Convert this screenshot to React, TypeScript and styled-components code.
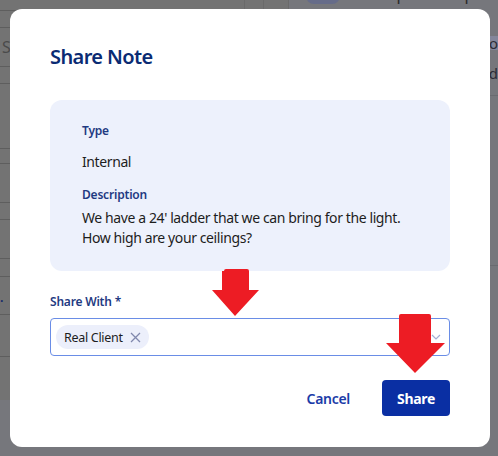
import React from "react";
import styled, { createGlobalStyle } from "styled-components";

const Global = createGlobalStyle`
  html, body { margin: 0; padding: 0; }
  body { font-family: "Noto Sans", "Open Sans", sans-serif; overflow: hidden; }
  * { box-sizing: border-box; }
`;

const Page = styled.div`
  position: relative;
  width: 498px;
  height: 456px;
  background: #76777c;
  display: flex;
  overflow: hidden;
`;

const LeftTable = styled.div`
  flex: none;
  width: 245px;
  height: 400px;
  background: #737373;
  border-right: 1px solid #6a6a6a;
  display: flex;
  flex-direction: column;
`;

const TableRow = styled.div<{ $h: number }>`
  height: ${(p) => p.$h}px;
  flex: none;
  border-bottom: 1px solid #5e5e5e;
  display: flex;
  align-items: center;
  padding-left: 2px;
  color: #4a4a4a;
  font-size: 16px;
`;

const BlueText = styled.span`
  color: #10256a;
  font-size: 15px;
  margin-left: -6px;
`;

const MidCol = styled.div<{ $w: number }>`
  flex: none;
  width: ${(p) => p.$w}px;
  height: 30px;
  border-right: 1px solid #6a6a6a;
  background: #737373;
`;

const RightPanel = styled.div`
  flex: 1;
  min-width: 0;
  overflow: hidden;
  display: flex;
  flex-direction: column;
`;

const MsgRow = styled.div`
  height: 20px;
  flex: none;
  display: flex;
  align-items: flex-end;
  gap: 18px;
  padding-left: 17px;
  margin-top: -16px;
`;

const Pill = styled.div`
  flex: none;
  width: 34px;
  height: 20px;
  border-radius: 8px;
  background: #666c89;
`;

const MsgText = styled.span`
  color: #2a2a2a;
  font-size: 16px;
  line-height: 20px;
  white-space: nowrap;
  letter-spacing: -0.3px;
`;

const SideBand = styled.div<{ $bg?: string; $h: number; $line?: boolean }>`
  height: ${(p) => p.$h}px;
  flex: none;
  background: ${(p) => p.$bg || "transparent"};
  border-bottom: ${(p) => (p.$line ? "1px solid #6a6b70" : "none")};
  display: flex;
  align-items: center;
  justify-content: flex-end;
  color: #2b2b35;
  font-size: 15px;
  white-space: nowrap;
  overflow: hidden;
`;

const Modal = styled.div`
  position: absolute;
  top: 9px;
  left: 10px;
  width: 480px;
  background: #ffffff;
  border-radius: 12px;
  padding: 34px 40px 31px;
  display: flex;
  flex-direction: column;
  & > * { flex: none; }
`;

const Title = styled.h2`
  margin: 0;
  font-size: 20px;
  line-height: 28px;
  font-weight: 600;
  letter-spacing: -0.6px;
  color: #0a2b73;
`;

const InfoBox = styled.div`
  margin-top: 29px;
  background: #edf1fc;
  border-radius: 12px;
  padding: 23px 32px 23px;
  display: flex;
  flex-direction: column;
`;

const Label = styled.div<{ $mt?: number }>`
  font-size: 12px;
  line-height: 16px;
  font-weight: 600;
  letter-spacing: -0.2px;
  color: #1f3a82;
  margin-top: ${(p) => p.$mt ?? 0}px;
`;

const Value = styled.div<{ $mt?: number }>`
  font-size: 14px;
  line-height: 20px;
  letter-spacing: -0.4px;
  color: #1d1d1d;
  margin-top: ${(p) => p.$mt ?? 0}px;
`;

const FieldLabel = styled(Label)`
  margin-top: 23px;
`;

const Input = styled.div`
  margin-top: 8px;
  height: 38px;
  border: 1px solid #6a8de6;
  border-radius: 4px;
  display: flex;
  align-items: center;
  padding: 0 8px 0 5px;
`;

const Chip = styled.div`
  height: 24px;
  border-radius: 12px;
  background: #eceffb;
  display: flex;
  align-items: center;
  gap: 7px;
  padding: 0 8px 0 8px;
  font-size: 12.5px;
  letter-spacing: -0.3px;
  color: #1d1d1d;
`;

const Spacer = styled.div`
  flex: 1;
`;

const Actions = styled.div`
  margin-top: 24px;
  display: flex;
  justify-content: flex-end;
  align-items: center;
  gap: 16px;
`;

const TextButton = styled.button`
  background: none;
  border: none;
  font-family: inherit;
  font-size: 14px;
  font-weight: 600;
  letter-spacing: -0.3px;
  color: #1b3ca8;
  height: 36px;
  padding: 0 16px;
`;

const PrimaryButton = styled.button`
  background: #0a2fa3;
  border: none;
  border-radius: 4px;
  font-family: inherit;
  font-size: 14px;
  font-weight: 700;
  letter-spacing: -0.3px;
  color: #ffffff;
  height: 36px;
  width: 68px;
`;

const Arrow = styled.svg<{ $x: number; $y: number }>`
  position: absolute;
  left: ${(p) => p.$x}px;
  top: ${(p) => p.$y}px;
`;

const XIcon = () => (
  <svg width="11" height="11" viewBox="0 0 11 11">
    <path d="M1 1L10 10M10 1L1 10" stroke="#8088ad" strokeWidth="1.3" fill="none" />
  </svg>
);

const Chevron = () => (
  <svg width="10" height="6" viewBox="0 0 10 6">
    <path d="M1 1L5 5L9 1" stroke="#a4afd6" strokeWidth="1.2" fill="none" />
  </svg>
);

export default function App() {
  const rows = [11, 17, 39, 17, 65, 15, 39, 17, 39, 18, 38, 42];
  return (
    <>
      <Global />
      <Page>
        <LeftTable>
          {rows.map((h, i) => (
            <TableRow key={i} $h={h}>
              {i === 2 ? "S" : i === 10 ? <BlueText>l.</BlueText> : null}
            </TableRow>
          ))}
        </LeftTable>
        <MidCol $w={19} />
        <MidCol $w={25} />
        <RightPanel>
          <MsgRow>
            <Pill />
            <MsgText>I can provide updates to</MsgText>
          </MsgRow>
          <SideBand $h={32} />
          <SideBand $h={14} $bg="#83869a">lo</SideBand>
          <SideBand $h={46} $line>d</SideBand>
          <SideBand $h={170} $line />
        </RightPanel>

        <Modal>
          <Title>Share Note</Title>
          <InfoBox>
            <Label>Type</Label>
            <Value $mt={13}>Internal</Value>
            <Label $mt={15}>Description</Label>
            <Value $mt={5}>
              We have a 24' ladder that we can bring for the light.
              <br />
              How high are your ceilings?
            </Value>
          </InfoBox>
          <FieldLabel>Share With *</FieldLabel>
          <Input>
            <Chip>
              Real Client
              <XIcon />
            </Chip>
            <Spacer />
            <Chevron />
          </Input>
          <Actions>
            <TextButton>Cancel</TextButton>
            <PrimaryButton>Share</PrimaryButton>
          </Actions>
        </Modal>

        <Arrow $x={212} $y={269} width="48" height="48" viewBox="0 0 48 48">
          <path d="M12 2Q12 0 14 0L35 0Q37 0 37 2L37 21L47 21L23 47L0 21L10 21L10 2Z" fill="#ed1c24" />
        </Arrow>
        <Arrow $x={386} $y={314} width="60" height="60" viewBox="0 0 60 60">
          <path d="M13 2Q13 0 15 0L43 0Q45 0 45 2L45 29L59 29L29 59L0 29L13 29Z" fill="#ed1c24" />
        </Arrow>
      </Page>
    </>
  );
}
